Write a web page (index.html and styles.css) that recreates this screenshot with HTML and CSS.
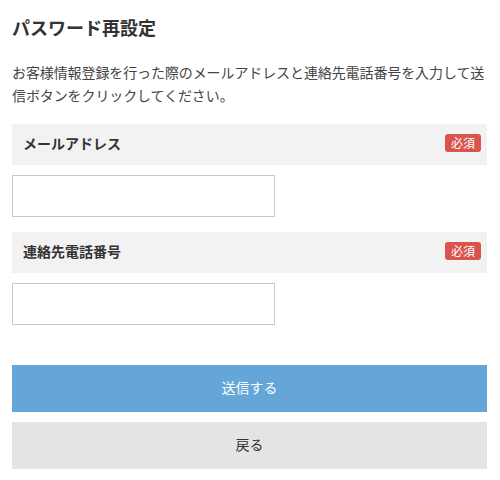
FILE: index.html
```html
<!DOCTYPE html>
<html lang="ja">
<head>
    <meta charset="UTF-8">
    <meta name="viewport" content="width=device-width, initial-scale=1.0">
    <title>パスワード再設定</title>
    <link rel="stylesheet" href="styles.css">
</head>
<body>
    <div class="reset-container">
        <h1 class="page-title">パスワード再設定</h1>
        <p class="lead">お客様情報登録を行った際のメールアドレスと連絡先電話番号を入力して送信ボタンをクリックしてください。</p>

        <form class="reset-form" onsubmit="return false;">
            <div class="field">
                <div class="field-head">
                    <label for="email">メールアドレス</label>
                    <span class="required">必須</span>
                </div>
                <input type="email" id="email" class="field-input">
            </div>

            <div class="field">
                <div class="field-head">
                    <label for="tel">連絡先電話番号</label>
                    <span class="required">必須</span>
                </div>
                <input type="tel" id="tel" class="field-input">
            </div>

            <div class="actions">
                <button type="submit" class="btn btn-submit">送信する</button>
                <button type="button" class="btn btn-back">戻る</button>
            </div>
        </form>
    </div>
</body>
</html>
```

FILE: styles.css
```css
body {
    font-family: "Noto Sans CJK JP", "Noto Sans", sans-serif;
    background-color: #fff;
    margin: 0;
    padding: 0;
    color: #333;
}

.reset-container {
    padding: 0 13px 0 12px;
}

.page-title {
    font-size: 18px;
    line-height: 27px;
    font-weight: bold;
    margin: 14px 0 0;
    color: #333;
}

.lead {
    font-size: 14px;
    line-height: 23px;
    letter-spacing: -0.1px;
    margin: 20px 0 0;
    color: #444;
}

.reset-form {
    margin-top: 17px;
}

.field {
    margin-bottom: 15px;
}

.field-head {
    display: flex;
    align-items: center;
    justify-content: space-between;
    box-sizing: border-box;
    height: 41px;
    padding: 0 6px 3px 11px;
    background-color: #f2f2f2;
}

.field-head label {
    font-size: 14px;
    font-weight: bold;
    color: #333;
}

.required {
    display: inline-block;
    background-color: #d9534f;
    color: #fff;
    font-size: 12px;
    line-height: 18px;
    padding: 0 6px;
    border-radius: 3px;
}

.field-input {
    display: block;
    box-sizing: border-box;
    width: 263px;
    height: 42px;
    margin-top: 10px;
    border: 1px solid #c8c8c8;
    padding: 0 10px;
    font-size: 14px;
    outline: none;
}

.actions {
    margin-top: 40px;
    display: flex;
    flex-direction: column;
    gap: 10px;
}

.btn {
    display: block;
    width: 100%;
    height: 47px;
    padding: 0 0 3px;
    border: none;
    font-family: inherit;
    font-size: 14px;
    cursor: pointer;
}

.btn-submit {
    background-color: #64a6d7;
    color: #fff;
}

.btn-back {
    background-color: #e4e4e4;
    color: #333;
}
```
